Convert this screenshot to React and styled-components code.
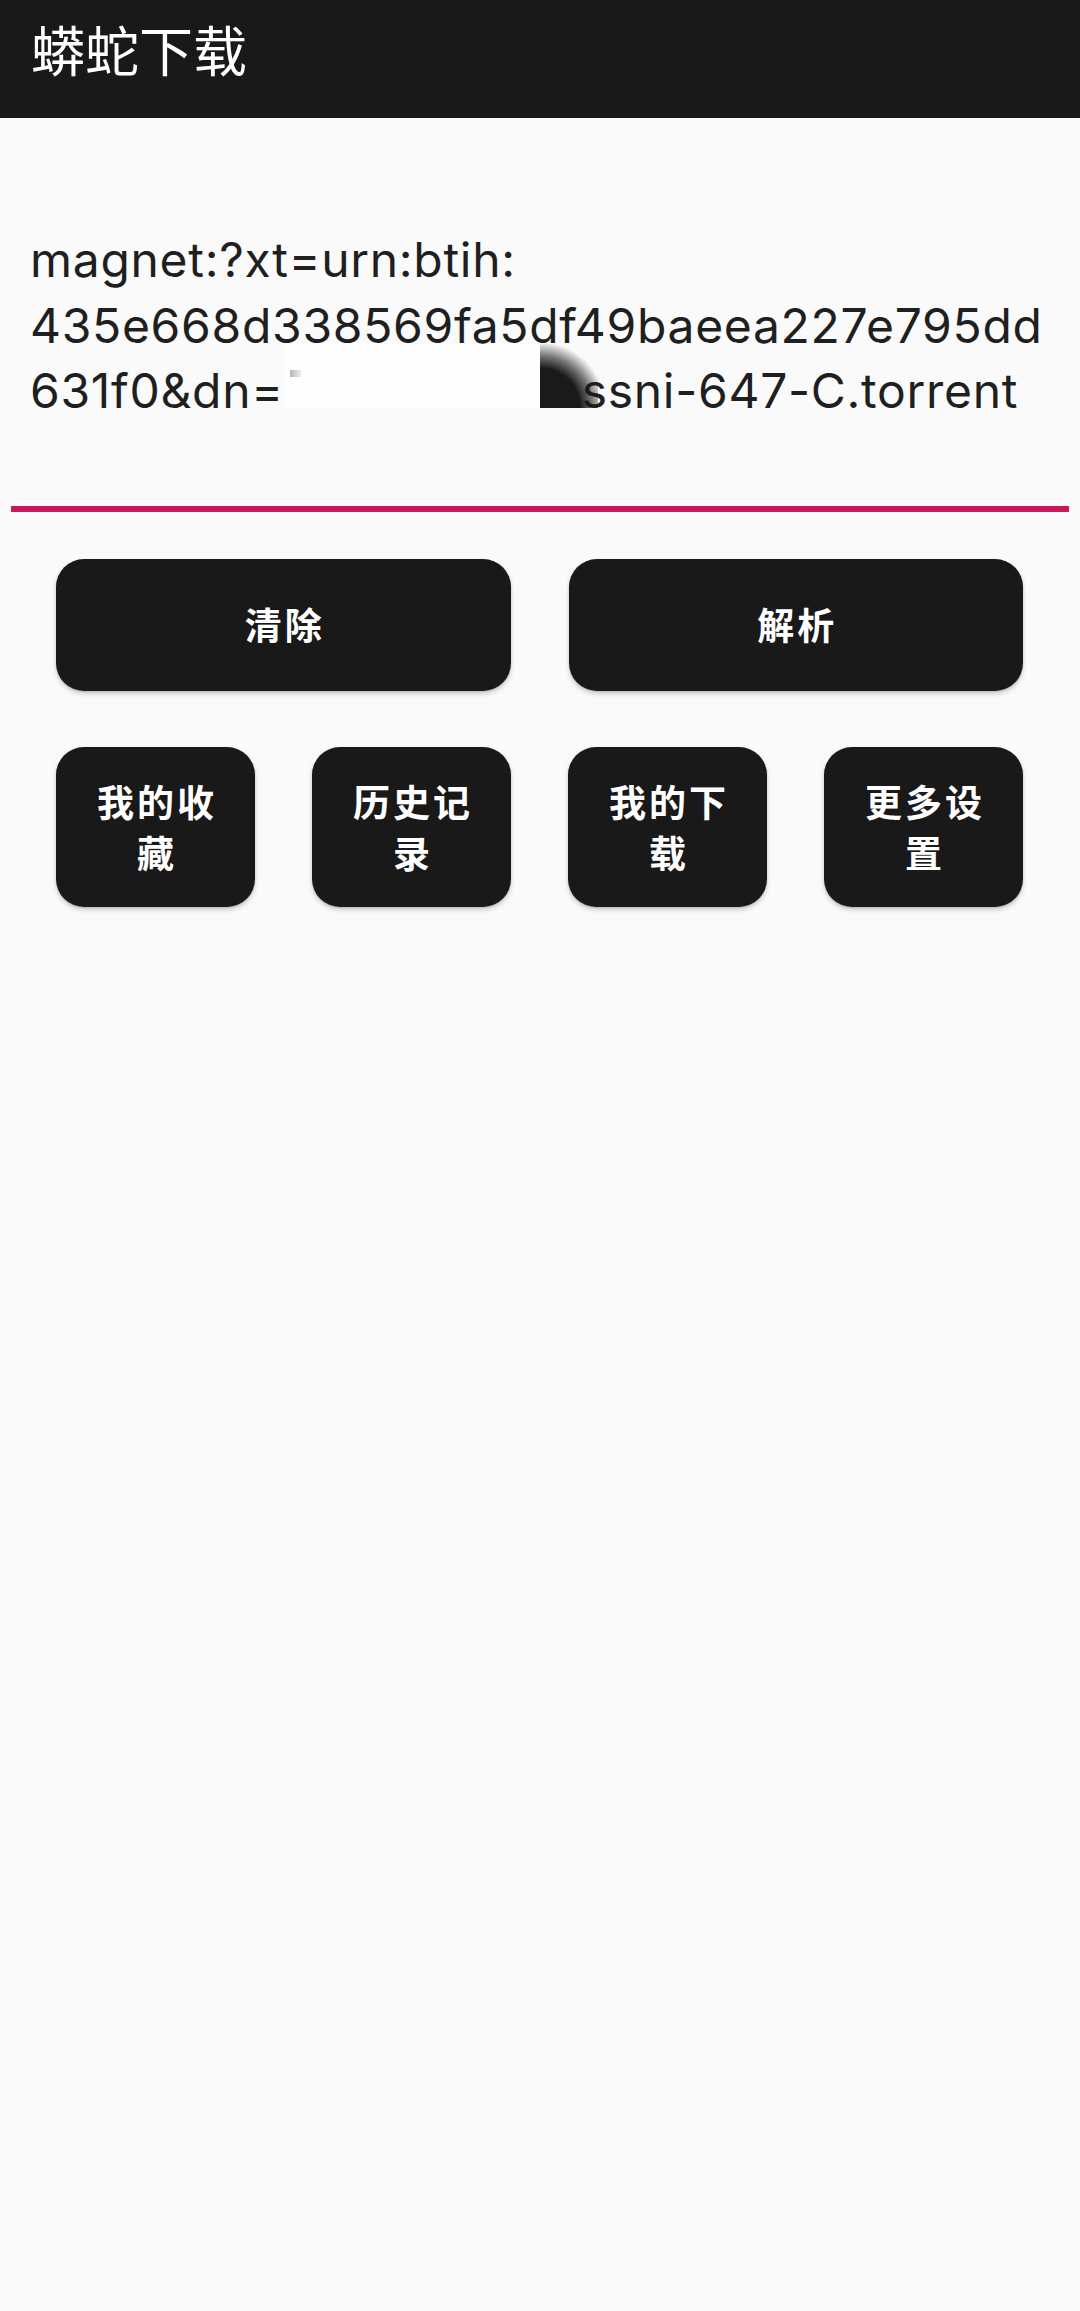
import React from "react";
import styled, { createGlobalStyle } from "styled-components";

const GlobalStyle = createGlobalStyle`
  html, body { margin: 0; padding: 0; background: #fafafa; }
  body { font-family: Inter, "Noto Sans CJK SC", sans-serif; }
  * { box-sizing: border-box; }
`;

const Page = styled.div`
  min-height: 2311px;
  background: #fafafa;
  display: flex;
  flex-direction: column;
`;

const AppBar = styled.header`
  height: 118px;
  background: #191919;
  display: flex;
  align-items: center;
  padding: 0 0 20px 31px;
`;

const Title = styled.h1`
  margin: 0;
  color: #ffffff;
  font-family: "Noto Sans CJK SC", sans-serif;
  font-weight: 400;
  font-size: 54px;
  line-height: 1;
`;

const Field = styled.div`
  margin: 109px 11px 0;
  padding: 0 0 82px 19px;
  border-bottom: 6px solid #c8185a;
  font-family: Inter, "Noto Sans CJK SC", sans-serif;
  font-size: 48px;
  line-height: 65.5px;
  color: #1f1f1f;
`;

const Line = styled.div`
  white-space: nowrap;
  letter-spacing: 0.7px;
`;

const Mask = styled.span`
  display: inline-block;
  width: ${(p) => p.$w}px;
  height: 64px;
  margin-top: -15px;
  background: #fefefe;
  position: relative;
`;

const Fragment = styled.span`
  position: absolute;
  left: 6px;
  top: 26px;
  width: 11px;
  height: 7px;
  background: linear-gradient(90deg, #b5b5b5, #ececec);
`;

const Blob = styled.span`
  display: inline-block;
  width: 58px;
  height: 64px;
  margin-top: -15px;
  margin-right: -16px;
  position: relative;
  z-index: 1;
  background: radial-gradient(
    circle at 0% 100%,
    #1a1a1a 0,
    #1a1a1a 40px,
    rgba(26, 26, 26, 0.6) 52px,
    rgba(26, 26, 26, 0) 66px
  );
`;

const ButtonRow = styled.div`
  display: grid;
  grid-template-columns: repeat(${(p) => p.$cols}, 1fr);
  column-gap: ${(p) => p.$gap}px;
  padding: 0 57px 0 56px;
  margin-top: ${(p) => p.$top}px;
`;

const Button = styled.button`
  height: ${(p) => p.$h}px;
  border: none;
  border-radius: 28px;
  background: #191919;
  color: #ffffff;
  font-family: "Noto Sans CJK SC", sans-serif;
  font-weight: 700;
  font-size: 37px;
  line-height: 51px;
  letter-spacing: 0.08em;
  padding: 0 0 0 0.08em;
  box-shadow: 0 3px 5px rgba(0, 0, 0, 0.18), 0 1px 2px rgba(0, 0, 0, 0.12);
  display: flex;
  flex-direction: column;
  align-items: center;
  justify-content: center;
  cursor: pointer;
`;

export default function App() {
  return (
    <Page>
      <GlobalStyle />
      <AppBar>
        <Title>蟒蛇下载</Title>
      </AppBar>
      <Field>
        <Line>magnet:?xt=urn:btih:</Line>
        <Line>435e668d338569fa5df49baeea227e795dd</Line>
        <Line>
          631f0&amp;dn=
          <Mask $w={256}>
            <Fragment />
          </Mask>
          <Blob />
          ssni-647-C.torrent
        </Line>
      </Field>
      <ButtonRow $cols={2} $gap={58} $top={47}>
        <Button $h={132}>清除</Button>
        <Button $h={132}>解析</Button>
      </ButtonRow>
      <ButtonRow $cols={4} $gap={57} $top={56}>
        <Button $h={160}>
          <span>我的收</span>
          <span>藏</span>
        </Button>
        <Button $h={160}>
          <span>历史记</span>
          <span>录</span>
        </Button>
        <Button $h={160}>
          <span>我的下</span>
          <span>载</span>
        </Button>
        <Button $h={160}>
          <span>更多设</span>
          <span>置</span>
        </Button>
      </ButtonRow>
    </Page>
  );
}
